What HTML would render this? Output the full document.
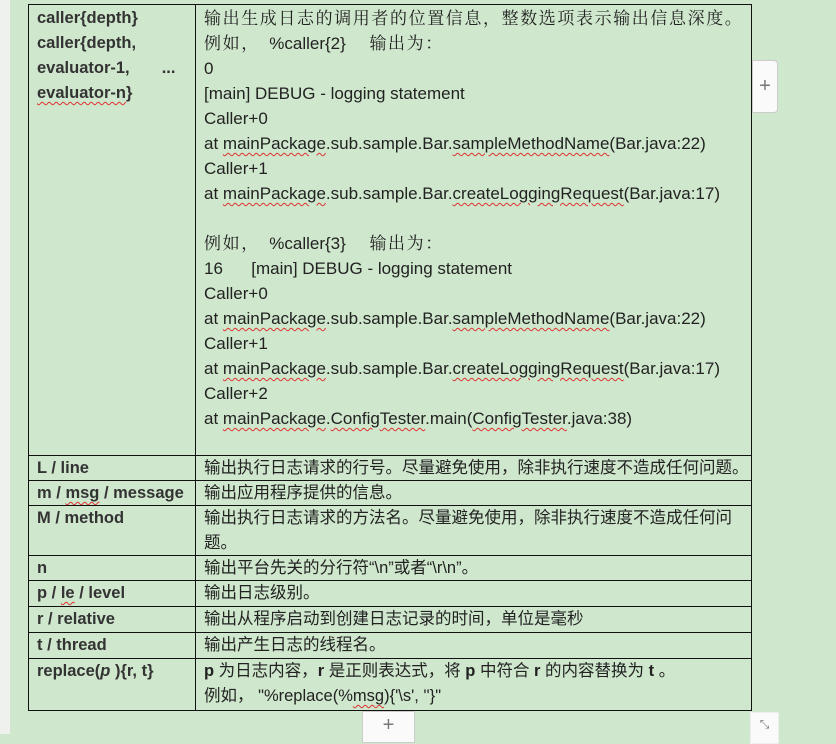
<!DOCTYPE html>
<html><head><meta charset="utf-8"><style>
body{margin:0;width:836px;height:734px;background:#cfe7cc;position:relative;overflow:hidden;font-family:"Liberation Sans","Noto Sans CJK SC",sans-serif;color:#222}
.strip{position:absolute;left:0;top:0;width:10px;height:734px;background:#eef1ee}
.c{position:absolute;border:1px solid #111;box-sizing:border-box;white-space:nowrap}
.l{left:28px;width:168px;padding-left:8px;font-weight:bold;font-size:16.5px;line-height:25px;color:#333}
.r{left:195px;width:557px;padding-left:8px;font-size:16.5px;line-height:25px;color:#222}
.big{font-size:17px}
.s{font-family:"Liberation Serif","Noto Serif CJK SC",serif;letter-spacing:1.6px}
.u{text-decoration:underline wavy #d33;text-decoration-thickness:1px;text-underline-offset:3px}
.btn{position:absolute;background:#fafafa;border:1px solid #ccc;color:#777;text-align:center;font-size:20px}
</style></head><body>
<div class="strip"></div>
<div class="c l" style="top:4px;height:452px;padding-top:1px">caller{depth}<br>caller{depth,<br>evaluator-1,&nbsp;&nbsp;&nbsp;&nbsp;&nbsp;&nbsp;&nbsp;...<br><span class="u">evaluator-n</span>}</div>
<div class="c r big" style="top:4px;height:452px;padding-top:1px"><span class="s">输出生成日志的调用者的位置信息，整数选项表示输出信息深度。</span><br><span class="s">例如，</span>&nbsp;&nbsp;%caller{2}&nbsp;&nbsp;&nbsp;&nbsp;&nbsp;<span class="s">输出为：</span><br>0<br>[main] DEBUG - logging statement<br>Caller+0<br>at <span class="u">mainPackage</span>.sub.sample.Bar.<span class="u">sampleMethodName</span>(Bar.java:22)<br>Caller+1<br>at <span class="u">mainPackage</span>.sub.sample.Bar.<span class="u">createLoggingRequest</span>(Bar.java:17)<br><br><span class="s">例如，</span>&nbsp;&nbsp;%caller{3}&nbsp;&nbsp;&nbsp;&nbsp;&nbsp;<span class="s">输出为：</span><br>16&nbsp;&nbsp;&nbsp;&nbsp;&nbsp;&nbsp;[main] DEBUG - logging statement<br>Caller+0<br>at <span class="u">mainPackage</span>.sub.sample.Bar.<span class="u">sampleMethodName</span>(Bar.java:22)<br>Caller+1<br>at <span class="u">mainPackage</span>.sub.sample.Bar.<span class="u">createLoggingRequest</span>(Bar.java:17)<br>Caller+2<br>at <span class="u">mainPackage</span>.<span class="u">ConfigTester</span>.main(<span class="u">ConfigTester</span>.java:38)</div>
<div class="c l" style="top:455px;height:26px">L / line</div><div class="c r" style="top:455px;height:26px">输出执行日志请求的行号。尽量避免使用，除非执行速度不造成任何问题。</div>
<div class="c l" style="top:480px;height:26px">m / <span class="u">msg</span> / message</div><div class="c r" style="top:480px;height:26px">输出应用程序提供的信息。</div>
<div class="c l" style="top:505px;height:51px">M / method</div><div class="c r" style="top:505px;height:51px">输出执行日志请求的方法名。尽量避免使用，除非执行速度不造成任何问<br>题。</div>
<div class="c l" style="top:555px;height:26px">n</div><div class="c r" style="top:555px;height:26px">输出平台先关的分行符“\n”或者“\r\n”。</div>
<div class="c l" style="top:580px;height:27px">p / <span class="u">le</span> / level</div><div class="c r" style="top:580px;height:27px">输出日志级别。</div>
<div class="c l" style="top:606px;height:27px">r / relative</div><div class="c r" style="top:606px;height:27px">输出从程序启动到创建日志记录的时间，单位是毫秒</div>
<div class="c l" style="top:632px;height:27px">t / thread</div><div class="c r" style="top:632px;height:27px">输出产生日志的线程名。</div>
<div class="c l" style="top:658px;height:53px">replace(<i>p</i> ){r, t}</div><div class="c r" style="top:658px;height:53px"><b>p</b> 为日志内容，<b>r</b> 是正则表达式，将 <b>p</b> 中符合 <b>r</b> 的内容替换为 <b>t</b> 。<br>例如，&nbsp;"%replace(%<span class="u">msg</span>){'\s', ''}"</div>
<div class="btn" style="left:752px;top:60px;width:24px;height:51px;line-height:51px;border-radius:0 4px 4px 0">+</div>
<div class="btn" style="left:362px;top:711px;width:51px;height:30px;line-height:26px">+</div>
<div class="btn" style="left:750px;top:712px;width:27px;height:30px;font-size:12px;line-height:22px;border-color:#eee">⤡</div>
</body></html>
